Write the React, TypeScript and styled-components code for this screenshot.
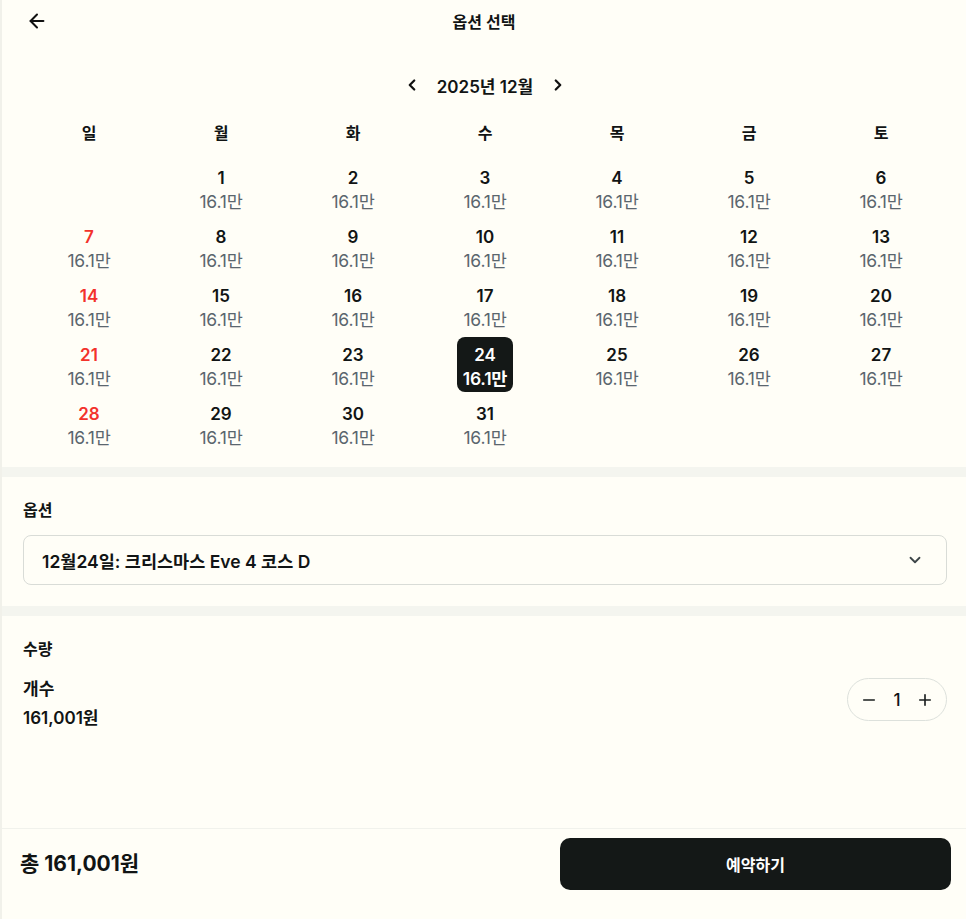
import React, { useState } from "react";
import styled, { createGlobalStyle } from "styled-components";
import {
  ArrowLeft,
  ChevronLeft,
  ChevronRight,
  ChevronDown,
  Minus,
  Plus,
} from "lucide-react";

const GlobalStyle = createGlobalStyle`
  * { box-sizing: border-box; }
  body {
    margin: 0;
    background: #fffef7;
    font-family: "Inter", "Noto Sans CJK KR", sans-serif;
    color: #111414;
  }
`;

const WEEKDAYS = ["일", "월", "화", "수", "목", "금", "토"];
const PRICE = "16.1만";

const App = () => {
  const [selected, setSelected] = useState(24);
  const [count, setCount] = useState(1);

  // December 2025 starts on a Monday
  const cells: (number | null)[] = [null];
  for (let d = 1; d <= 31; d++) cells.push(d);

  const total = (161001 * count).toLocaleString("ko-KR");

  return (
    <>
      <GlobalStyle />
      <Page>
        <Header>
          <BackButton aria-label="뒤로">
            <ArrowLeft size={22} strokeWidth={2.2} />
          </BackButton>
          <Title>옵션 선택</Title>
        </Header>

        <CalendarSection>
          <MonthNav>
            <NavButton>
              <ChevronLeft size={18} strokeWidth={3} />
            </NavButton>
            <MonthLabel>2025년 12월</MonthLabel>
            <NavButton>
              <ChevronRight size={18} strokeWidth={3} />
            </NavButton>
          </MonthNav>
          <WeekRow>
            {WEEKDAYS.map((w) => (
              <WeekDay key={w}>{w}</WeekDay>
            ))}
          </WeekRow>
          <DayGrid>
            {cells.map((d, i) =>
              d === null ? (
                <EmptyCell key={`e${i}`} />
              ) : (
                <DayCell
                  key={d}
                  $active={d === selected}
                  onClick={() => setSelected(d)}
                >
                  <DayNum $sunday={i % 7 === 0} $active={d === selected}>
                    {d}
                  </DayNum>
                  <DayPrice $active={d === selected}>{PRICE}</DayPrice>
                </DayCell>
              )
            )}
          </DayGrid>
        </CalendarSection>

        <Divider />

        <Section>
          <SectionTitle>옵션</SectionTitle>
          <Select>
            <span>12월{selected}일: 크리스마스 Eve 4 코스 D</span>
            <ChevronDown size={18} strokeWidth={2.4} color="#3d4548" />
          </Select>
        </Section>

        <Divider />

        <QuantitySection>
          <SectionTitle>수량</SectionTitle>
          <QtyRow>
            <QtyInfo>
              <QtyLabel>개수</QtyLabel>
              <QtyLabel>161,001원</QtyLabel>
            </QtyInfo>
            <Stepper>
              <StepButton onClick={() => setCount((c) => Math.max(1, c - 1))}>
                <Minus size={18} strokeWidth={2.2} />
              </StepButton>
              <StepValue>{count}</StepValue>
              <StepButton onClick={() => setCount((c) => c + 1)}>
                <Plus size={18} strokeWidth={2.2} />
              </StepButton>
            </Stepper>
          </QtyRow>
        </QuantitySection>

        <Footer>
          <Total>총 {total}원</Total>
          <ReserveButton>예약하기</ReserveButton>
        </Footer>
      </Page>
    </>
  );
};

export default App;

const Page = styled.div`
  display: flex;
  flex-direction: column;
  height: 100vh;
  border-left: 2px solid #f1f1ea;
`;

const Header = styled.header`
  position: relative;
  display: flex;
  align-items: center;
  justify-content: center;
  height: 42px;
  flex-shrink: 0;
`;

const BackButton = styled.button`
  position: absolute;
  left: 24px;
  top: 10px;
  display: flex;
  padding: 0;
  border: none;
  background: none;
  color: #111;
  cursor: pointer;
`;

const Title = styled.h1`
  margin: 0;
  font-size: 16px;
  font-weight: 600;
`;

const CalendarSection = styled.section`
  display: flex;
  flex-direction: column;
  padding: 31px 19px 16px 21px;
`;

const MonthNav = styled.div`
  display: flex;
  align-items: center;
  justify-content: center;
  gap: 16px;
  height: 24px;
`;

const NavButton = styled.button`
  display: flex;
  padding: 0;
  border: none;
  background: none;
  color: #111;
  cursor: pointer;
`;

const MonthLabel = styled.span`
  font-size: 17px;
  font-weight: 600;
`;

const WeekRow = styled.div`
  display: grid;
  grid-template-columns: repeat(7, 1fr);
  margin-top: 23px;
  height: 24px;
  align-items: center;
`;

const WeekDay = styled.div`
  text-align: center;
  font-size: 16px;
  font-weight: 600;
`;

const DayGrid = styled.div`
  display: grid;
  grid-template-columns: repeat(7, 1fr);
  row-gap: 4px;
  margin-top: 16px;
  justify-items: center;
`;

const EmptyCell = styled.div`
  height: 55px;
`;

const DayCell = styled.div<{ $active: boolean }>`
  display: flex;
  flex-direction: column;
  align-items: center;
  width: 56px;
  height: 55px;
  padding-top: 6px;
  border-radius: 8px;
  background: ${(p) => (p.$active ? "#141817" : "transparent")};
  cursor: pointer;
`;

const DayNum = styled.span<{ $sunday: boolean; $active: boolean }>`
  line-height: 24px;
  font-size: 17px;
  font-weight: 600;
  color: ${(p) => (p.$active ? "#fff" : p.$sunday ? "#f3322b" : "#111414")};
`;

const DayPrice = styled.span<{ $active: boolean }>`
  line-height: 24px;
  font-size: 17.5px;
  font-weight: ${(p) => (p.$active ? 600 : 400)};
  letter-spacing: -0.2px;
  white-space: nowrap;
  color: ${(p) => (p.$active ? "#fff" : "#5b666e")};
`;

const Divider = styled.div`
  height: 10px;
  flex-shrink: 0;
  background: #f4f5ef;
`;

const Section = styled.section`
  display: flex;
  flex-direction: column;
  gap: 14px;
  padding: 22px 19px 21px 21px;
`;

const SectionTitle = styled.h2`
  margin: 0;
  line-height: 22px;
  font-size: 16px;
  font-weight: 600;
`;

const Select = styled.div`
  display: flex;
  align-items: center;
  justify-content: space-between;
  height: 50px;
  padding: 0 22px 0 18px;
  border: 1px solid #d9dcd7;
  border-radius: 8px;
  font-size: 17.5px;
  font-weight: 600;
`;

const QuantitySection = styled(Section)`
  flex: 1;
  gap: 18px;
`;

const QtyRow = styled.div`
  display: flex;
  align-items: flex-start;
  justify-content: space-between;
`;

const QtyInfo = styled.div`
  display: flex;
  flex-direction: column;
  gap: 7px;
`;

const QtyLabel = styled.span`
  line-height: 22px;
  font-size: 17px;
  font-weight: 600;
`;

const Stepper = styled.div`
  display: flex;
  align-items: center;
  justify-content: space-between;
  width: 100px;
  height: 43px;
  padding: 0 12px;
  border: 1px solid #dde1dc;
  border-radius: 22px;
`;

const StepButton = styled.button`
  display: flex;
  padding: 0;
  border: none;
  background: none;
  color: #1b1f1f;
  cursor: pointer;
`;

const StepValue = styled.span`
  font-size: 17px;
  font-weight: 500;
`;

const Footer = styled.footer`
  display: flex;
  align-items: flex-start;
  justify-content: space-between;
  height: 91px;
  flex-shrink: 0;
  padding: 9px 15px 0 18px;
  border-top: 1px solid #f1f2ec;
`;

const Total = styled.span`
  margin-top: 11px;
  line-height: 30px;
  font-size: 21px;
  font-weight: 700;
`;

const ReserveButton = styled.button`
  width: 391px;
  height: 52px;
  border: none;
  border-radius: 10px;
  background: #141817;
  color: #fff;
  font-family: inherit;
  font-size: 16px;
  font-weight: 600;
  cursor: pointer;
`;
